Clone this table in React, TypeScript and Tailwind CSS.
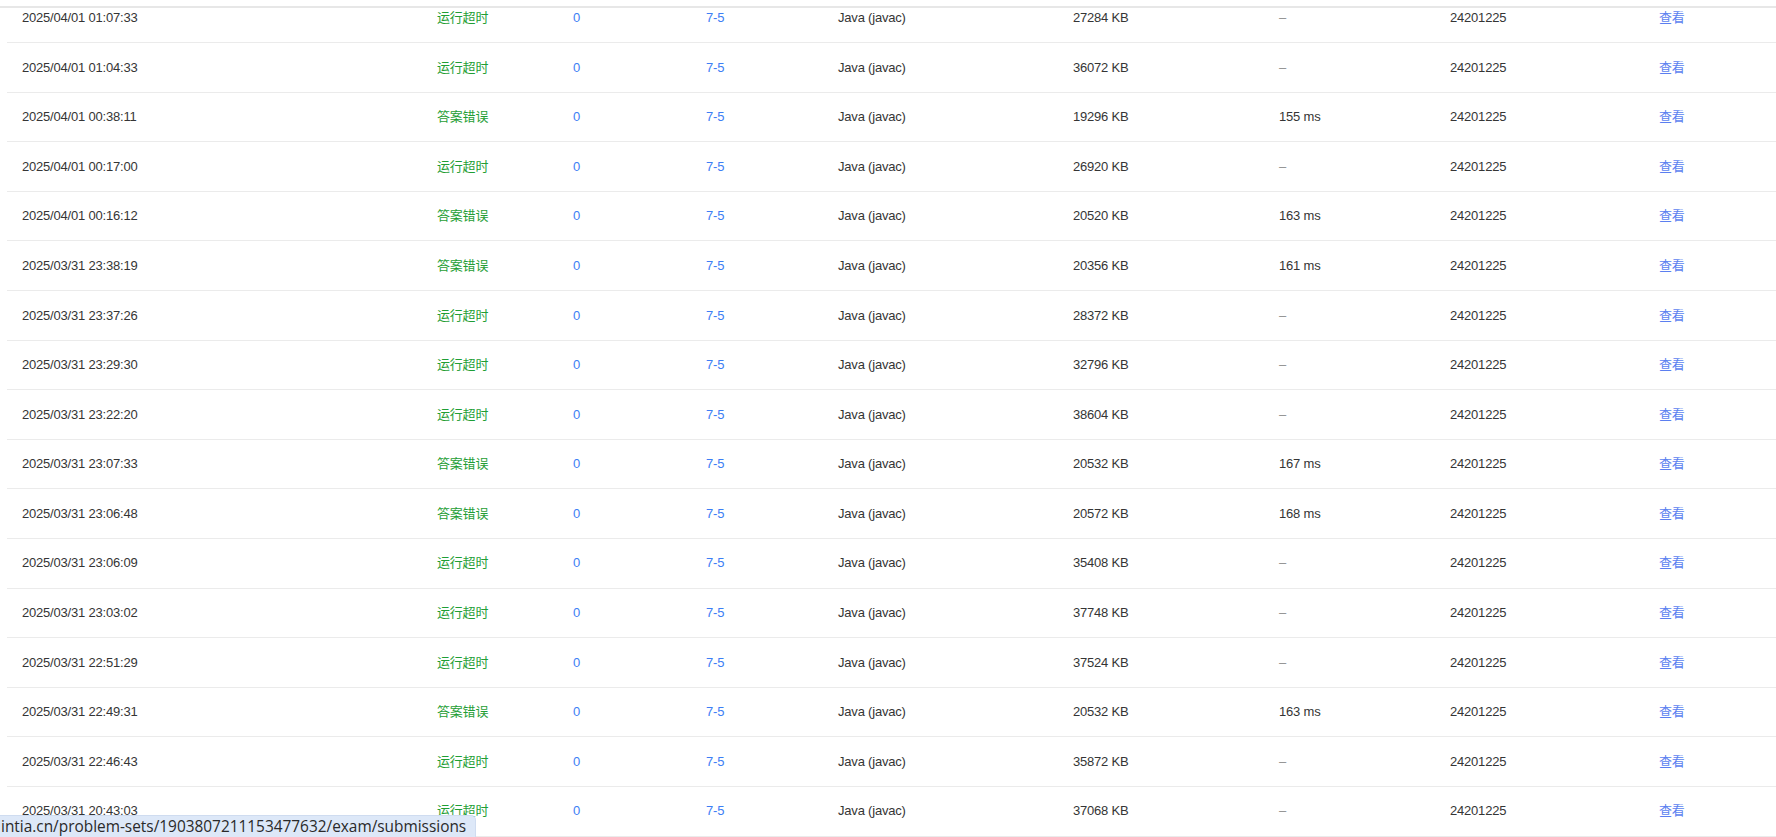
import React from "react";

type Row = { t: string; s: string; kb: string; ms: string };

const rows: Row[] = [
  { t: "2025/04/01 01:07:33", s: "运行超时", kb: "27284 KB", ms: "–" },
  { t: "2025/04/01 01:04:33", s: "运行超时", kb: "36072 KB", ms: "–" },
  { t: "2025/04/01 00:38:11", s: "答案错误", kb: "19296 KB", ms: "155 ms" },
  { t: "2025/04/01 00:17:00", s: "运行超时", kb: "26920 KB", ms: "–" },
  { t: "2025/04/01 00:16:12", s: "答案错误", kb: "20520 KB", ms: "163 ms" },
  { t: "2025/03/31 23:38:19", s: "答案错误", kb: "20356 KB", ms: "161 ms" },
  { t: "2025/03/31 23:37:26", s: "运行超时", kb: "28372 KB", ms: "–" },
  { t: "2025/03/31 23:29:30", s: "运行超时", kb: "32796 KB", ms: "–" },
  { t: "2025/03/31 23:22:20", s: "运行超时", kb: "38604 KB", ms: "–" },
  { t: "2025/03/31 23:07:33", s: "答案错误", kb: "20532 KB", ms: "167 ms" },
  { t: "2025/03/31 23:06:48", s: "答案错误", kb: "20572 KB", ms: "168 ms" },
  { t: "2025/03/31 23:06:09", s: "运行超时", kb: "35408 KB", ms: "–" },
  { t: "2025/03/31 23:03:02", s: "运行超时", kb: "37748 KB", ms: "–" },
  { t: "2025/03/31 22:51:29", s: "运行超时", kb: "37524 KB", ms: "–" },
  { t: "2025/03/31 22:49:31", s: "答案错误", kb: "20532 KB", ms: "163 ms" },
  { t: "2025/03/31 22:46:43", s: "运行超时", kb: "35872 KB", ms: "–" },
  { t: "2025/03/31 20:43:03", s: "运行超时", kb: "37068 KB", ms: "–" },
];

export default function App() {
  return (
    <div
      className="relative h-[837px] w-full overflow-hidden bg-white text-[13px] tracking-[-0.2px] text-[#353535]"
      style={{ fontFamily: '"Liberation Sans", "Noto Sans CJK SC", sans-serif' }}
    >
      <div className="ml-[7px] -mt-[6.6px]">
        {rows.map((r, i) => (
          <div
            key={i}
            className="grid h-[49.6px] grid-cols-[415px_136px_133px_132px_235px_206px_171px_209px_1fr] items-center border-b border-[#ebebeb]"
          >
            <div className="pl-[15px]">{r.t}</div>
            <div className="pl-[15px] text-[#1f9e35]">{r.s}</div>
            <div className="pl-[15px] text-[#3d7ef5]">0</div>
            <div className="pl-[15px] text-[#3d7ef5]">7-5</div>
            <div className="pl-[15px]">Java (javac)</div>
            <div className="pl-[15px]">{r.kb}</div>
            <div className={r.ms === "–" ? "pl-[15px] text-[#8f8f8f]" : "pl-[15px]"}>{r.ms}</div>
            <div className="pl-[15px]">24201225</div>
            <div className="pl-[15px] text-[#5b7ff0]">查看</div>
          </div>
        ))}
      </div>

      <div className="absolute left-0 right-0 top-0 h-[8px] border-b-2 border-[#e7e7e7] bg-white" />

      <div
        className="absolute bottom-0 left-0 flex h-[22px] w-[476px] items-center overflow-hidden rounded-tr-[5px] border-r border-t border-[#cfdcf0] bg-[#dde8f8] text-[15.4px] tracking-normal text-[#2a2a2a]"
        style={{ fontFamily: '"Open Sans", "Noto Sans", sans-serif' }}
      >
        <span className="whitespace-nowrap pl-[1px]">intia.cn/problem-sets/1903807211153477632/exam/submissions</span>
      </div>
    </div>
  );
}
